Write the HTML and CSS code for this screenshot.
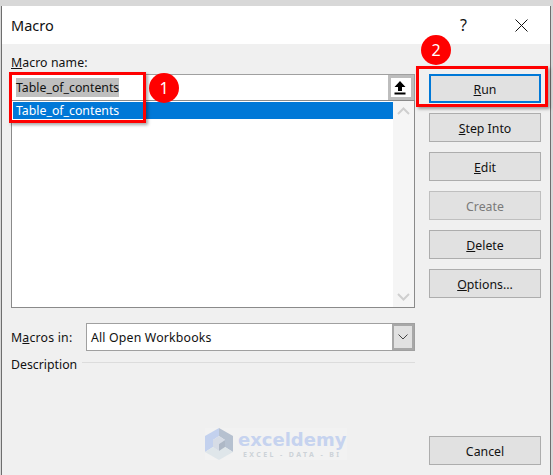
FILE: index.html
```html
<!DOCTYPE html>
<html lang="en">

<head>
    <meta charset="UTF-8">
    <meta name="viewport" content="width=device-width, initial-scale=1.0">
    <title>Macro</title>
    <link rel="stylesheet" href="styles.css">
</head>

<body>
    <div class="dialog">
        <div class="titlebar">
            <span class="title">Macro</span>
            <span class="help">?</span>
            <svg class="close" width="13" height="13" viewBox="0 0 13 13">
                <path d="M0.5 0.5L12.5 12.5M12.5 0.5L0.5 12.5" stroke="#111" stroke-width="1" fill="none" />
            </svg>
        </div>
        <div class="content">
            <div class="left">
                <label class="name-label"><u>M</u>acro name:</label>
                <div class="name-box">
                    <span class="name-text">Table_of_contents</span>
                    <span class="up-btn">
                        <svg width="12" height="14" viewBox="0 0 12 14">
                            <path d="M6 0L11.5 6H8V10H4V6H0.5Z" fill="#000" />
                            <rect x="0.5" y="11.5" width="11" height="2" fill="#000" />
                        </svg>
                    </span>
                </div>
                <div class="list">
                    <div class="list-main">
                        <div class="list-item">Table_of_contents</div>
                    </div>
                    <div class="scrollbar">
                        <svg width="13" height="8" viewBox="0 0 13 8">
                            <path d="M1 7L6.5 1.5L12 7" stroke="#cfcfcf" stroke-width="2" fill="none" />
                        </svg>
                        <svg width="13" height="8" viewBox="0 0 13 8">
                            <path d="M1 1L6.5 6.5L12 1" stroke="#cfcfcf" stroke-width="2" fill="none" />
                        </svg>
                    </div>
                </div>
                <div class="macros-row">
                    <label class="macros-label">M<u>a</u>cros in:</label>
                    <div class="select">
                        <span class="select-text">All Open Workbooks</span>
                        <span class="select-btn">
                            <svg width="10" height="6" viewBox="0 0 10 6">
                                <path d="M0.5 0.5L5 5L9.5 0.5" stroke="#444" stroke-width="1" fill="none" />
                            </svg>
                        </span>
                    </div>
                </div>
                <div class="desc-row">
                    <span>Description</span>
                    <span class="desc-line"></span>
                </div>
            </div>
            <div class="buttons">
                <div class="btn btn-default"><span><u>R</u>un</span></div>
                <div class="btn"><span><u>S</u>tep Into</span></div>
                <div class="btn"><span><u>E</u>dit</span></div>
                <div class="btn btn-disabled"><span>Create</span></div>
                <div class="btn"><span><u>D</u>elete</span></div>
                <div class="btn"><span><u>O</u>ptions...</span></div>
                <div class="btn btn-cancel"><span>Cancel</span></div>
            </div>
        </div>
    </div>

    <!-- annotations on top of the screenshot -->
    <div class="mark mark-name"></div>
    <div class="mark mark-run"></div>
    <div class="badge badge-1">1</div>
    <div class="badge badge-2">2</div>

    <div class="watermark">
        <svg class="wm-logo" width="28" height="32" viewBox="0 0 28 32">
            <path d="M14 0L0 8V24L8 19V12L14 8Z" fill="#c3d1ee" />
            <path d="M14 0L28 8V24L20 19V12L14 8Z" fill="#b6c1d0" />
            <path d="M0 24L14 32L28 24L20 19L14 23L8 19Z" fill="#dfe6ea" />
            <path d="M8 12L14 8L20 12L14 16V23L8 19Z" fill="#d6dce6" />
            <path d="M14 16L20 12V19L14 23Z" fill="#aeb8c6" />
        </svg>
        <div class="wm-text">
            <div class="wm-name">exceldemy</div>
            <div class="wm-sub">EXCEL - DATA - BI</div>
        </div>
    </div>
</body>

</html>
```

FILE: styles.css
```css
body {
    margin: 0;
    width: 553px;
    height: 475px;
    overflow: hidden;
    background-color: #d8d8d8;
    font-family: "Noto Sans", Arial, sans-serif;
    font-size: 12.3px;
    color: #111;
    position: relative;
}

.dialog {
    margin: 6px 0 0 1px;
    width: 548px;
    height: 469px;
    border-left: 1px solid #6e6e6e;
    border-right: 1px solid #6e6e6e;
    display: flex;
    flex-direction: column;
}

.titlebar {
    height: 38px;
    background-color: #fff;
    display: flex;
    align-items: center;
    padding-left: 9px;
}

.title {
    font-size: 14.5px;
    flex: 1;
}

.help {
    font-size: 16px;
    margin-right: 48px;
}

.close {
    margin-right: 22px;
}

.content {
    flex: 1;
    background-color: #f0f0f0;
    display: flex;
    padding: 0 7px 0 9px;
    gap: 14px;
}

.left {
    width: 404px;
}

.name-label {
    display: block;
    height: 30px;
    line-height: 37px;
    letter-spacing: 0.08px;
}

.name-box {
    height: 26px;
    background-color: #fff;
    border: 1px solid #a0a0a0;
    border-bottom: 0;
    box-sizing: border-box;
    display: flex;
    align-items: center;
    justify-content: space-between;
    padding-left: 4px;
}

.name-text {
    background-color: #bfbfbf;
    line-height: 19px;
}

.up-btn {
    width: 26px;
    height: 25px;
    box-sizing: border-box;
    background-color: #fff;
    border: 3px solid #bdbdbd;
    display: flex;
    align-items: center;
    justify-content: center;
    padding-right: 2px;
}

.list {
    height: 208px;
    box-sizing: border-box;
    background-color: #fff;
    border: 1px solid #8a8a8a;
    display: flex;
}

.list-main {
    flex: 1;
    padding: 1px 0 0 1px;
}

.list-item {
    height: 17px;
    line-height: 17px;
    padding-left: 3px;
    background-color: #0078d7;
    color: #fff;
}

.scrollbar {
    width: 21px;
    background-color: #f5f5f5;
    display: flex;
    flex-direction: column;
    justify-content: space-between;
    align-items: center;
    padding: 6px 0;
    box-sizing: border-box;
}

.macros-row {
    margin-top: 15px;
    display: flex;
    align-items: center;
    justify-content: space-between;
}

.macros-label {
    letter-spacing: 0.2px;
}

.select {
    width: 329px;
    height: 28px;
    box-sizing: border-box;
    background-color: #fff;
    border: 1px solid #a0a0a0;
    display: flex;
    align-items: center;
    justify-content: space-between;
    padding-left: 4px;
}

.select-text {
    letter-spacing: 0.17px;
}

.select-btn {
    width: 22px;
    height: 26px;
    box-sizing: border-box;
    background-color: #e1e1e1;
    border: 2px solid #a8a8a8;
    display: flex;
    align-items: center;
    justify-content: center;
}

.desc-row {
    display: flex;
    align-items: center;
    gap: 5px;
    margin-top: 3px;
    height: 20px;
}

.desc-line {
    flex: 1;
    height: 1px;
    background-color: #dcdcdc;
    margin-top: -3px;
}

.buttons {
    width: 112px;
    display: flex;
    flex-direction: column;
    gap: 10px;
    padding-top: 30px;
}

.btn {
    height: 29px;
    box-sizing: border-box;
    padding-top: 1px;
    background-color: #e1e1e1;
    border: 1px solid #adadad;
    display: flex;
    align-items: center;
    justify-content: center;
}

.btn-default {
    border: 2px solid #0078d7;
}

.btn-disabled {
    color: #7a7a7a;
    border-color: #bfbfbf;
}

.btn-cancel {
    margin-top: 128px;
}

.mark {
    position: absolute;
    box-sizing: border-box;
    border: 3px solid #f00;
    box-shadow: 2px 2px 3px rgba(0, 0, 0, 0.35);
}

.mark-name {
    left: 9px;
    top: 72px;
    width: 137px;
    height: 51px;
}

.mark-run {
    left: 416px;
    top: 66px;
    width: 132px;
    height: 41px;
}

.badge {
    position: absolute;
    width: 30px;
    height: 30px;
    border-radius: 50%;
    background-color: #f00;
    color: #fff;
    font-size: 16px;
    line-height: 30px;
    text-align: center;
}

.badge-1 {
    left: 149px;
    top: 73px;
}

.badge-2 {
    left: 421px;
    top: 35px;
}

.watermark {
    position: absolute;
    left: 205px;
    top: 428px;
    width: 142px;
    height: 32px;
    display: flex;
    gap: 5px;
    background-color: #f2f2f2;
}

.wm-logo {
    flex: none;
}

.wm-text {
    padding-top: 3px;
}

.wm-name {
    font-family: "DejaVu Sans", sans-serif;
    font-size: 18px;
    font-weight: 700;
    line-height: 18px;
    color: #c6d3ef;
}

.wm-sub {
    margin-top: 1px;
    font-size: 7px;
    font-weight: 700;
    line-height: 9px;
    color: #cdd2d8;
    letter-spacing: 2.4px;
    text-align: center;
    white-space: nowrap;
}
```
